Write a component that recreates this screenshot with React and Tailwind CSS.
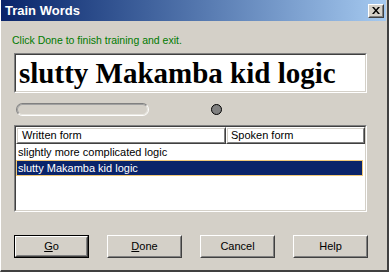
import React from 'react';

const ui = { fontFamily: '"Liberation Sans", Arial, sans-serif' };

const Raised = ({ children, className = '' }) => (
    <div className={`border border-t-white border-l-white border-r-[#404040] border-b-[#404040] ${className}`}>
        <div className="w-full h-full border border-t-[#d4d0c8] border-l-[#d4d0c8] border-r-[#808080] border-b-[#808080] flex items-center justify-center">
            {children}
        </div>
    </div>
);

const Sunken = ({ children, className = '' }) => (
    <div className={`border border-t-[#808080] border-l-[#808080] border-r-white border-b-white ${className}`}>
        <div className="w-full h-full border border-t-[#404040] border-l-[#404040] border-r-[#d4d0c8] border-b-[#d4d0c8] bg-white overflow-hidden">
            {children}
        </div>
    </div>
);

const Button = ({ label, accel, isDefault }) => {
    const text = accel ? (
        <span>
            <span className="underline underline-offset-1">{label[0]}</span>
            {label.slice(1)}
        </span>
    ) : (
        label
    );
    if (isDefault) {
        return (
            <div className="w-[75px] h-[23px] border border-black">
                <Raised className="w-full h-full">{text}</Raised>
            </div>
        );
    }
    return <Raised className="w-[75px] h-[23px]">{text}</Raised>;
};

export default function App() {
    const rows = ['slightly more complicated logic', 'slutty Makamba kid logic'];

    return (
        <div className="w-[389px] h-[272px] overflow-hidden bg-[#d4d0c8] text-[11px] text-black" style={ui}>
            <div className="w-full h-full border-l border-l-white border-r-2 border-r-[#404040] border-b-2 border-b-[#404040] flex flex-col">
                {/* Title bar */}
                <div className="h-[21px] mr-[1px] flex items-center justify-between bg-linear-to-r from-[#0a246a] to-[#a6caf0]">
                    <span className="pl-1 text-white font-bold text-[13px]">Train Words</span>
                    <Raised className="w-[16px] h-[14px] mr-[2px] bg-[#d4d0c8]">
                        <svg width="8" height="7" viewBox="0 0 8 7">
                            <path d="M0 0h2l2 2.5L6 0h2L5 3.5 8 7H6L4 4.5 2 7H0l3-3.5z" fill="#000" />
                        </svg>
                    </Raised>
                </div>

                <div className="flex flex-col pl-[13px] pr-[20px]">
                    {/* Hint */}
                    <div className="mt-[13px] -ml-[2px] h-[13px] leading-[13px] text-[10.5px] text-[#007a00]">
                        Click Done to finish training and exit.
                    </div>

                    {/* Current phrase */}
                    <Sunken className="mt-[6px] h-[40px]">
                        <div
                            className="pl-[3px] h-full flex items-center font-bold text-[29px] leading-none"
                            style={{ fontFamily: '"Liberation Serif", "Times New Roman", serif' }}
                        >
                            slutty Makamba kid logic
                        </div>
                    </Sunken>

                    {/* Level meter */}
                    <div className="mt-[10px] h-[13px] flex items-center">
                        <div className="ml-[2px] w-[133px] h-[13px] rounded-full border border-t-[#808080] border-l-[#808080] border-r-white border-b-white">
                            <div className="w-full h-full rounded-full border border-t-[#a0a0a0] border-l-[#a0a0a0] border-r-[#e8e6e0] border-b-[#e8e6e0]" />
                        </div>
                        <div className="ml-[62px] w-[11px] h-[11px] rounded-full bg-[#808080] border border-black" />
                    </div>

                    {/* Word list */}
                    <Sunken className="mt-[9px] h-[87px]">
                        <div className="flex h-[17px]">
                            <Raised className="w-[210px] h-full">
                                <span className="w-full pl-[4px]">Written form</span>
                            </Raised>
                            <Raised className="flex-1 h-full">
                                <span className="w-full pl-[3px]">Spoken form</span>
                            </Raised>
                        </div>
                        <div className="flex flex-col">
                            {rows.map((r, i) => (
                                <div
                                    key={i}
                                    className={
                                        i === 1
                                            ? 'h-[16px] leading-[14px] pl-[1px] mr-[2px] bg-[#0a246a] text-white border border-[#f0c878]'
                                            : 'h-[16px] leading-[16px] pl-[2px]'
                                    }
                                >
                                    {r}
                                </div>
                            ))}
                        </div>
                    </Sunken>
                </div>

                {/* Buttons */}
                <div className="mt-[23px] pl-[13px] flex gap-[18px]">
                    <Button label="Go" accel isDefault />
                    <Button label="Done" accel />
                    <Button label="Cancel" />
                    <Button label="Help" />
                </div>
            </div>
        </div>
    );
}
